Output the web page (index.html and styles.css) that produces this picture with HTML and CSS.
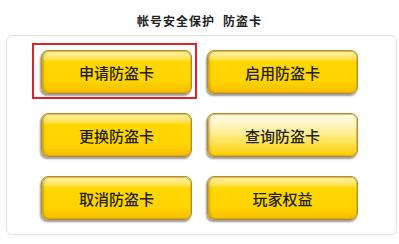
FILE: index.html
```html
<!DOCTYPE html>
<html>
    <head>
        <meta charset="utf-8">
        <title>防盗卡</title>
        <link rel="stylesheet" href="styles.css">
    </head>
    <body>
        <div class="title">帐号安全保护<span class="sub">防盗卡</span></div>
        <div class="panel">
            <div class="grid">
                <div class="cell selected"><button class="card-btn">申请防盗卡</button></div>
                <div class="cell"><button class="card-btn">启用防盗卡</button></div>
                <div class="cell"><button class="card-btn">更换防盗卡</button></div>
                <div class="cell"><button class="card-btn light">查询防盗卡</button></div>
                <div class="cell"><button class="card-btn">取消防盗卡</button></div>
                <div class="cell"><button class="card-btn">玩家权益</button></div>
            </div>
        </div>
    </body>
</html>
```

FILE: styles.css
```css
body {
    margin: 0;
    background: #fff;
    font-family: "Noto Sans CJK SC", "Noto Sans", sans-serif;
}
.title {
    padding-top: 11px;
    line-height: 20px;
    height: 20px;
    margin-bottom: 4px;
    text-align: center;
    font-size: 12px;
    font-weight: bold;
    letter-spacing: 1px;
    color: #222;
}
.title .sub {
    margin-left: 8px;
}
.panel {
    margin: 0 2px 0 6px;
    height: 200px;
    box-sizing: border-box;
    padding: 7px 0 0 25px;
    border: 1px solid #e2e2e2;
    border-radius: 6px;
    background: #fff;
}
.grid {
    display: grid;
    grid-template-columns: 165px 165px;
    column-gap: 1px;
    row-gap: 7px;
}
.cell {
    height: 56px;
    box-sizing: border-box;
    padding: 5px 0 0 7px;
    border: 2px solid transparent;
}
.cell.selected {
    border-color: #d9232d;
}
.card-btn {
    display: block;
    width: 151px;
    height: 44px;
    padding: 0;
    border: 1px solid #b58d2c;
    border-radius: 7px;
    background: linear-gradient(to bottom, #fff2a8 0%, #ffe45e 18%, #ffd700 26%, #ffd400 72%, #f7bd00 100%);
    box-shadow: -1px 2px 2px rgba(0, 0, 0, 0.4), inset 0 0 0 1px rgba(205, 160, 50, 0.6), inset 2px 0 2px rgba(110, 80, 20, 0.3);
    font-family: "Noto Sans CJK SC", sans-serif;
    font-size: 15px;
    font-weight: 500;
    color: #1e1e1e;
    cursor: pointer;
}
.card-btn.light {
    background: linear-gradient(to bottom, #fffbe8 0%, #fff4b8 30%, #ffe45e 65%, #ffcd00 100%);
}
```
